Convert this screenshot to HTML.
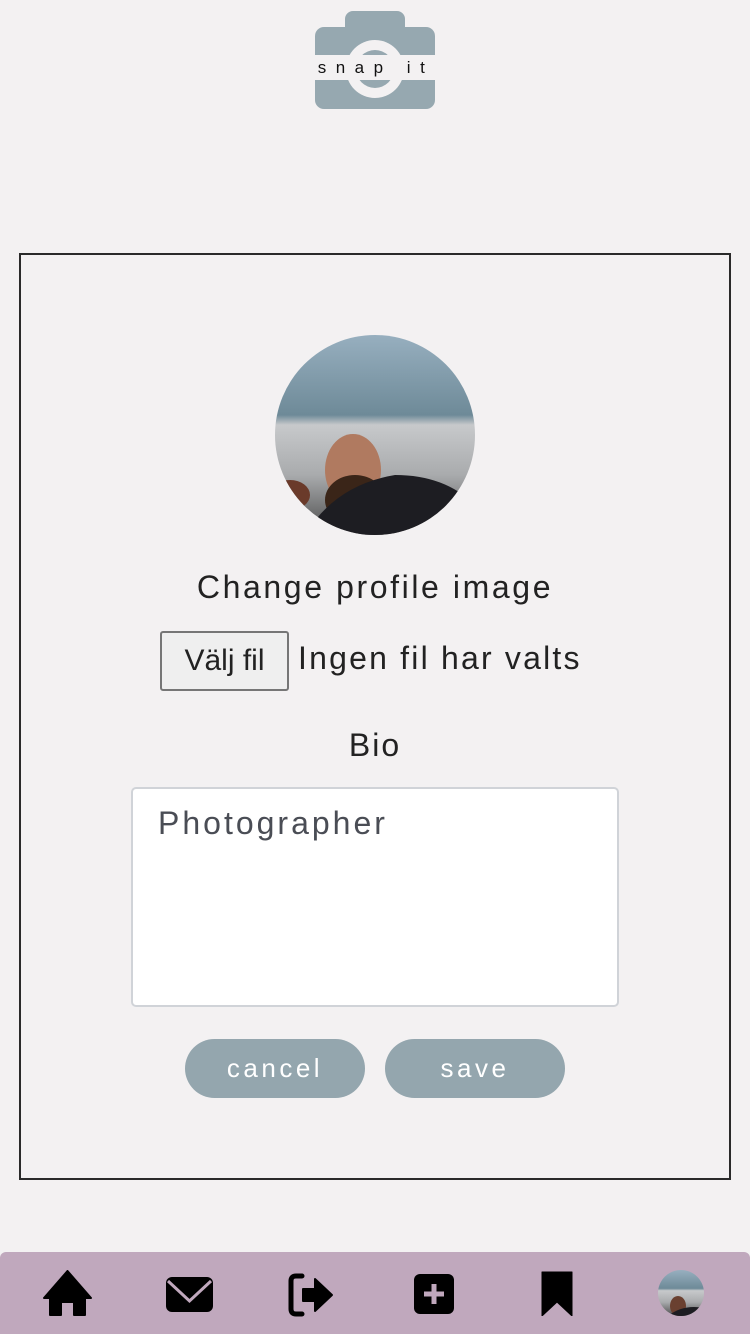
<!DOCTYPE html>
<html><head><meta charset="utf-8"><style>
*{margin:0;padding:0;box-sizing:border-box}
body{width:750px;height:1334px;background:#f3f1f2;font-family:"Liberation Sans",sans-serif;position:relative;overflow:hidden;color:#222}
.card{position:absolute;left:19px;top:253px;width:712px;height:927px;border:2px solid #2a2a2a}
.t{position:absolute;left:0;width:750px;text-align:center}
.nav{position:absolute;left:0;top:1252px;width:750px;height:82px;background:#c0a8bd;border-radius:6px 6px 0 0}
.btn{position:absolute;top:1039px;width:180px;height:59px;border-radius:30px;background:#94a6ae;color:#fff;font-size:26px;letter-spacing:3.5px;text-align:center;line-height:59px}
</style></head><body>
<svg style="position:absolute;left:315px;top:10px" width="120" height="100" viewBox="0 0 120 100">
<rect x="30" y="1" width="60" height="30" rx="8" fill="#96a8b0"/>
<rect x="0" y="17" width="120" height="82" rx="9" fill="#96a8b0"/>
<circle cx="60" cy="59" r="29" fill="#f3f1f2"/>
<circle cx="60" cy="59" r="19" fill="#96a8b0"/>
<rect x="0" y="45" width="120" height="25" fill="#f3f1f2"/>
<text x="61" y="63" text-anchor="middle" font-family="Liberation Sans" font-size="17" letter-spacing="9.5" fill="#111">snap it</text>
</svg>
<div class="card"></div>
<svg style="position:absolute;left:275px;top:335px" width="200" height="200">
<defs><clipPath id="c"><circle cx="100" cy="100" r="100"/></clipPath>
<linearGradient id="g" x1="0" y1="0" x2="0" y2="1"><stop offset="0" stop-color="#97afbf"/><stop offset="0.4" stop-color="#6e8a98"/><stop offset="0.45" stop-color="#c7c9cb"/><stop offset="0.7" stop-color="#a9abad"/><stop offset="1" stop-color="#4a4a4a"/></linearGradient></defs>
<g clip-path="url(#c)"><rect width="200" height="200" fill="url(#g)"/>
<ellipse cx="78" cy="135" rx="28" ry="36" fill="#b07a60"/>
<ellipse cx="80" cy="165" rx="30" ry="25" fill="#3a2518"/>
<path d="M30 200 Q60 150 120 140 Q170 140 200 170 L200 200Z" fill="#1d1d22"/>
<ellipse cx="15" cy="160" rx="20" ry="15" fill="#6a3a2a"/></g></svg>
<div class="t" style="top:569px;font-size:32px;letter-spacing:2.6px">Change profile image</div>
<div style="position:absolute;left:160px;top:631px;width:129px;height:60px;border:2px solid #767676;border-radius:3px;background:#efefef;font-size:30px;text-align:center;line-height:56px">Välj fil</div>
<div style="position:absolute;left:298px;top:640px;font-size:32px;letter-spacing:2.2px">Ingen fil har valts</div>
<div class="t" style="top:727px;font-size:32px;letter-spacing:2px">Bio</div>
<div style="position:absolute;left:131px;top:787px;width:488px;height:220px;background:#fff;border:2px solid #d0d3d8;border-radius:5px;padding:16px 25px;font-size:32px;color:#4a4d55;letter-spacing:3px">Photographer</div>
<div class="btn" style="left:185px">cancel</div>
<div class="btn" style="left:385px">save</div>
<div class="nav">
<svg style="position:absolute;left:42px;top:18px" width="51" height="46" viewBox="0 0 51 46"><path d="M25.5 1 L49 28 L43 28 L43 45 L32 45 L32 32 L19 32 L19 45 L8 45 L8 28 L2 28Z" fill="#000" stroke="#000" stroke-width="2" stroke-linejoin="round"/></svg>
<svg style="position:absolute;left:166px;top:25px" width="47" height="35" viewBox="0 0 47 35"><rect width="47" height="35" rx="6" fill="#000"/><path d="M2 4 L23.5 24 L45 4" fill="none" stroke="#c0a8bd" stroke-width="3"/></svg>
<svg style="position:absolute;left:288px;top:21px" width="46" height="44" viewBox="0 0 46 44"><path d="M14 3 H8 Q3 3 3 8 V36 Q3 41 8 41 H14" fill="none" stroke="#000" stroke-width="5" stroke-linecap="round"/><path d="M15 16 H27 V6 L44 22 L27 38 V28 H15Z" fill="#000" stroke="#000" stroke-width="2" stroke-linejoin="round"/></svg>
<svg style="position:absolute;left:414px;top:22px" width="40" height="40" viewBox="0 0 40 40"><rect width="40" height="40" rx="6" fill="#000"/><path d="M20 10 V30 M10 20 H30" stroke="#c0a8bd" stroke-width="5"/></svg>
<svg style="position:absolute;left:540px;top:18px" width="34" height="46" viewBox="0 0 34 46"><path d="M2 2 H32 V46 L17 32 L2 46Z" fill="#000" stroke="#000" stroke-width="1" stroke-linejoin="round"/></svg>
<svg style="position:absolute;left:658px;top:18px" width="46" height="46"><defs><clipPath id="c2"><circle cx="23" cy="23" r="23"/></clipPath></defs><g clip-path="url(#c2)"><rect width="46" height="46" fill="url(#g)"/><ellipse cx="20" cy="36" rx="8" ry="10" fill="#6a4030"/><path d="M10 46 Q25 34 46 38 V46Z" fill="#1d1d22"/></g></svg>
</div>
</body></html>
